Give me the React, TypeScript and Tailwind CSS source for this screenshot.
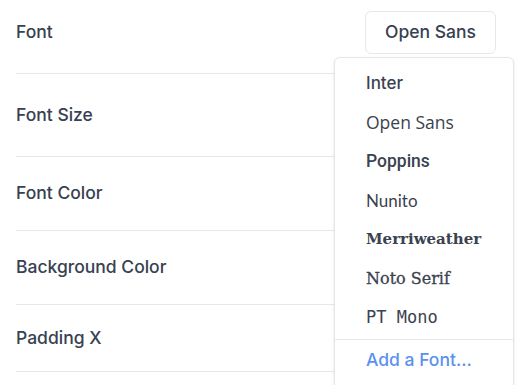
import React from 'react';

const rows = [
  { label: 'Font', h: 'h-[74px]' },
  { label: 'Font Size', h: 'h-[83px]' },
  { label: 'Font Color', h: 'h-[74px]' },
  { label: 'Background Color', h: 'h-[74px]' },
  { label: 'Padding X', h: 'h-[67px]' },
];

const fonts = [
  { name: 'Inter', cls: "font-['Inter'] font-medium text-[17px]" },
  { name: 'Open Sans', cls: "font-['Open_Sans'] text-[17.5px]" },
  { name: 'Poppins', cls: "font-['Roboto'] font-medium text-[17.5px]" },
  { name: 'Nunito', cls: "font-['Lato'] text-[17px]" },
  { name: 'Merriweather', cls: "font-['DejaVu_Serif'] font-bold text-[15px]" },
  { name: 'Noto Serif', cls: "font-['DejaVu_Serif'] text-[16px] [-webkit-text-stroke:0.3px_#3b424f]" },
  { name: 'PT Mono', cls: "font-['DejaVu_Sans_Mono'] text-[17px]" },
];

export default function App() {
  return (
    <div className="relative w-[517px] h-[385px] overflow-hidden bg-white font-['Inter',sans-serif] text-gray-700">
      <div className="px-4">
        {rows.map((row, i) => (
          <div
            key={row.label}
            className={`${row.h} flex border-b border-gray-200 ${i === 0 ? 'items-start pt-[11px]' : 'items-center'}`}
          >
            <div className={`flex-1 flex justify-between ${i === 0 ? 'items-center h-[43px]' : 'items-center'}`}>
              <span className="text-[17.5px] font-medium text-[#374151]">{row.label}</span>
              {i === 0 && (
                <button className="w-[131px] h-[43px] mr-[5px] rounded-md border border-gray-200 bg-white text-[17.5px] font-medium text-[#374151]">
                  Open Sans
                </button>
              )}
            </div>
          </div>
        ))}
      </div>

      {/* font dropdown */}
      <div className="absolute left-[334px] top-[57px] w-[180px] h-[340px] rounded-md border border-gray-200 bg-white shadow-sm pt-[6px]">
        {fonts.map((f) => (
          <div key={f.name} className={`h-[39px] flex items-center pl-[31px] text-[#3b424f] ${f.cls}`}>
            {f.name}
          </div>
        ))}
        <div className="mt-[2px] border-t border-gray-200" />
        <div className="h-[41px] flex items-center pl-[31px] text-[17.5px] font-medium text-[#5b91f0]">
          Add a Font...
        </div>
      </div>
    </div>
  );
}
